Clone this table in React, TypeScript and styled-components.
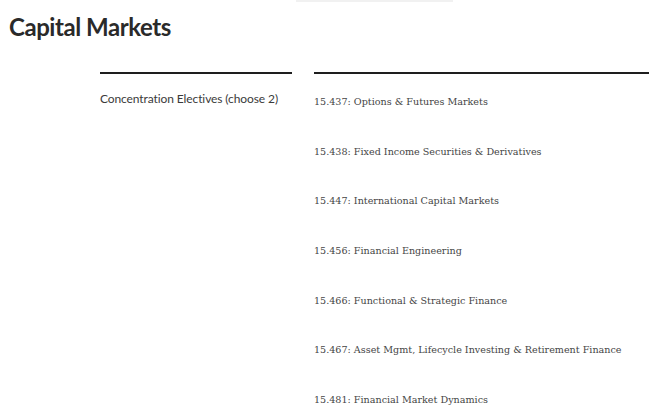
import React from "react";
import styled, { createGlobalStyle } from "styled-components";

const Global = createGlobalStyle`
  html, body { margin: 0; padding: 0; background: #fff; }
  body { font-family: "Lato", "Liberation Sans", sans-serif; }
`;

const Page = styled.div`
  width: 653px;
  height: 419px;
  overflow: hidden;
  display: flex;
  flex-direction: column;
`;

const TopShade = styled.div`
  margin-left: 296px;
  width: 157px;
  height: 2px;
  background: #f1f1f1;
`;

const Title = styled.h1`
  margin: 10px 0 0 9px;
  font-family: "Lato", sans-serif;
  font-weight: 700;
  font-size: 24px;
  line-height: 30px;
  color: #2a2a2a;
  letter-spacing: -0.45px;
`;

const Section = styled.div`
  display: grid;
  grid-template-columns: 192px 335px;
  column-gap: 22px;
  margin: 30px 0 0 100px;
`;

const Column = styled.div`
  border-top: 2px solid #1e1e1e;
  display: flex;
  flex-direction: column;
`;

const Label = styled.div`
  font-family: "Lato", sans-serif;
  font-size: 12px;
  letter-spacing: -0.1px;
  color: #3a3a3a;
  padding-top: 17px;
  line-height: 15px;
`;

const List = styled.ul`
  list-style: none;
  margin: 0;
  padding: 21px 0 0 0;
  display: flex;
  flex-direction: column;
  gap: 35.7px;
`;

const Item = styled.li`
  font-family: "DejaVu Serif", serif;
  font-size: 9.6px;
  line-height: 14px;
  color: #454545;
  font-variant-numeric: oldstyle-nums;
  white-space: nowrap;
`;

const courses = [
  "15.437: Options & Futures Markets",
  "15.438: Fixed Income Securities & Derivatives",
  "15.447: International Capital Markets",
  "15.456: Financial Engineering",
  "15.466: Functional & Strategic Finance",
  "15.467: Asset Mgmt, Lifecycle Investing & Retirement Finance",
  "15.481: Financial Market Dynamics",
];

export default function App() {
  return (
    <Page>
      <Global />
      <TopShade />
      <Title>Capital Markets</Title>
      <Section>
        <Column>
          <Label>Concentration Electives (choose 2)</Label>
        </Column>
        <Column>
          <List>
            {courses.map((c) => (
              <Item key={c}>{c}</Item>
            ))}
          </List>
        </Column>
      </Section>
    </Page>
  );
}
